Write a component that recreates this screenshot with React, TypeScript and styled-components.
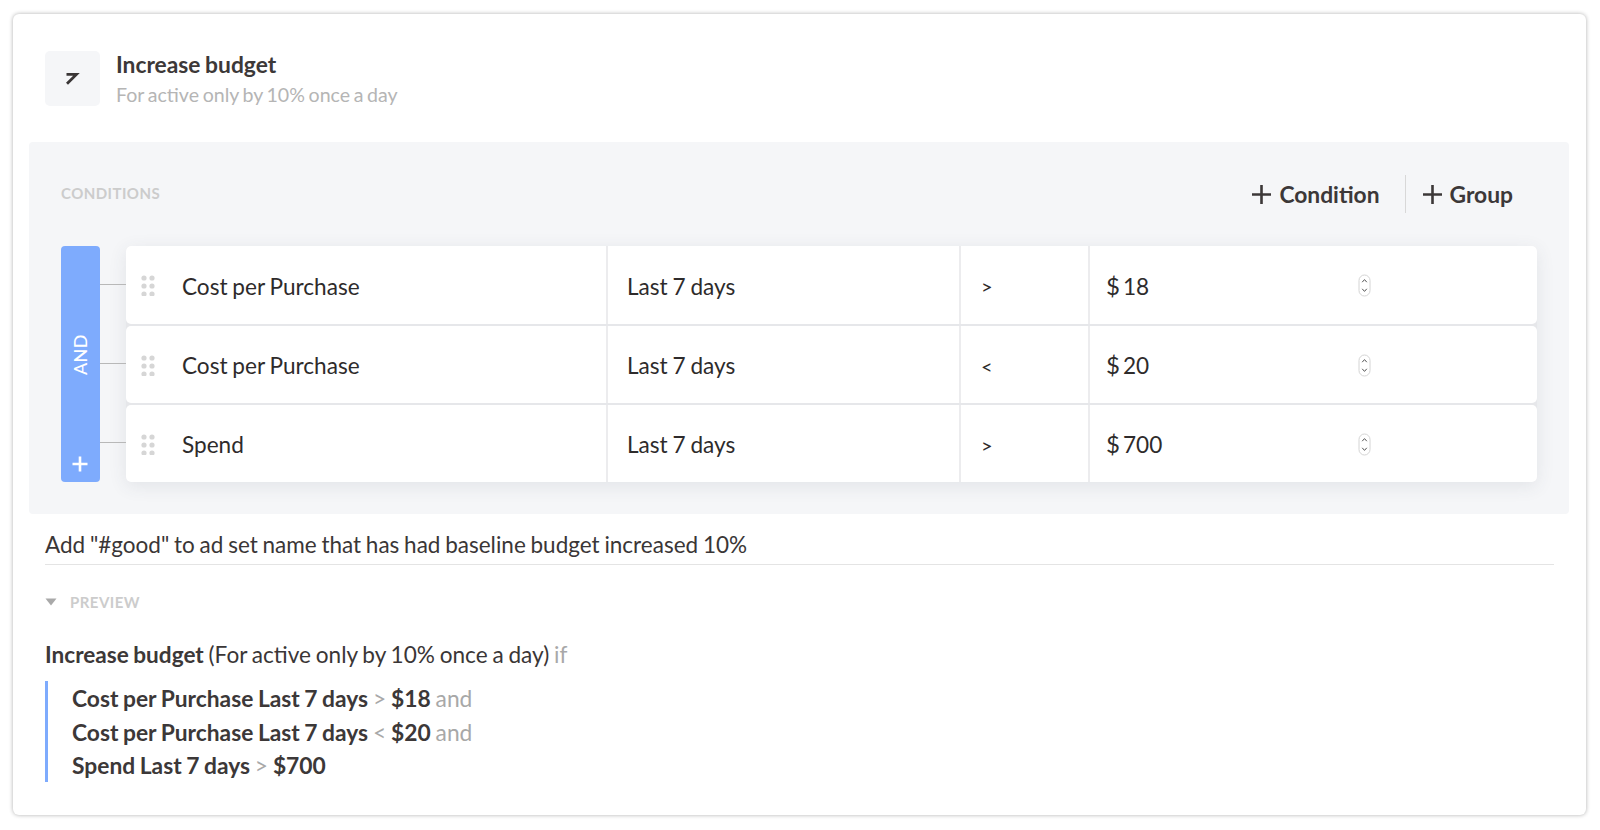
import React from "react";
import styled, { createGlobalStyle } from "styled-components";

const Global = createGlobalStyle`
  html, body { margin: 0; padding: 0; background: #fff; }
  body { font-family: Lato, "Liberation Sans", sans-serif; color: #3a3636; }
`;

const Page = styled.div`
  width: 1600px;
  height: 830px;
  padding: 14px 13px 0 13px;
  box-sizing: border-box;
  overflow: hidden;
`;

const Card = styled.div`
  width: 1573px;
  height: 801px;
  box-sizing: border-box;
  background: #fff;
  border-radius: 6px;
  box-shadow: 0 0 4px rgba(0, 0, 0, 0.32);
  padding: 37px 16px 0 16px;
  word-spacing: -1px;
`;

const Header = styled.div`
  display: flex;
  gap: 16px;
  padding-left: 16px;
  height: 55px;
`;

const IconBox = styled.div`
  width: 55px;
  height: 55px;
  border-radius: 5px;
  background: #f5f6f8;
  display: flex;
  align-items: center;
  justify-content: center;
`;

const Titles = styled.div`
  display: flex;
  flex-direction: column;
`;

const Title = styled.div`
  font-size: 22.8px;
  font-weight: 700;
  line-height: 26px;
  color: #3c3838;
`;

const Subtitle = styled.div`
  font-size: 19.6px;
  line-height: 26px;
  margin-top: 5px;
  color: #b5b5b5;
  word-spacing: -1.4px;
`;

const Panel = styled.div`
  margin-top: 36px;
  height: 372px;
  width: 1540px;
  background: #f5f6f8;
  border-radius: 4px;
  box-sizing: border-box;
  padding: 0 32px;
`;

const PanelHead = styled.div`
  height: 104px;
  display: flex;
  align-items: center;
  justify-content: space-between;
`;

const SectionLabel = styled.div`
  font-size: 15px;
  font-weight: 700;
  letter-spacing: 0.45px;
  line-height: 18px;
  color: #cccccc;
  text-transform: uppercase;
`;

const ConditionsLabel = styled(SectionLabel)`
  margin-top: -2px;
`;

const Actions = styled.div`
  display: flex;
  align-items: center;
  padding-right: 24px;
`;

const ActionButton = styled.div<{ $divided?: boolean }>`
  display: flex;
  align-items: center;
  gap: 7px;
  height: 38px;
  font-size: 22.8px;
  font-weight: 700;
  color: #3c3838;
  ${(p) => p.$divided && "border-left: 1px solid #d8d8d8; margin-left: 25px; padding-left: 16px;"}
`;

const Builder = styled.div`
  display: flex;
`;

const AndBar = styled.div`
  width: 39px;
  height: 236px;
  border-radius: 4px;
  background: #7eabfd;
  color: #fff;
  position: relative;
  flex-shrink: 0;
`;

const AndLabel = styled.div`
  position: absolute;
  left: 0;
  right: 0;
  top: 90px;
  height: 38px;
  display: flex;
  align-items: center;
  justify-content: center;
  writing-mode: vertical-rl;
  transform: rotate(180deg);
  font-size: 18px;
  font-weight: 500;
  letter-spacing: 0.3px;
  margin-left: -1px;
`;

const AndPlus = styled.svg`
  position: absolute;
  left: 11px;
  bottom: 10px;
`;

const Rows = styled.div`
  width: 1411px;
  margin-left: 26px;
  display: flex;
  flex-direction: column;
  gap: 2px;
  border-radius: 5px;
  box-shadow: 0 4px 18px rgba(60, 70, 90, 0.1);
  background: #e6e7ea;
  height: 236px;
`;

const Row = styled.div`
  position: relative;
  flex: 1;
  display: grid;
  grid-template-columns: 480px 353px 129px 1fr;
  background: #fff;
  border-radius: 5px;
  font-size: 22.6px;
  color: #2e2b2b;

  &:first-child {
    flex: 0 0 78px;
  }
`;

const Connector = styled.div`
  position: absolute;
  left: -26px;
  top: 37px;
  width: 26px;
  height: 1px;
  background: #b8b8b8;

  ${Row}:first-child > & {
    top: 38px;
  }
`;

const Cell = styled.div<{ $divided?: boolean; $pad: number }>`
  display: flex;
  align-items: center;
  padding-top: 2px;
  padding-left: ${(p) => p.$pad}px;
  ${(p) => p.$divided && "border-left: 2px solid #ececee;"}
`;

const Grip = styled.svg`
  position: absolute;
  left: 15px;
  top: 29px;
`;

const Op = styled.span`
  font-size: 20px;
  margin-left: -1px;
`;

const Money = styled.span`
  display: flex;
  align-items: center;
  gap: 3px;
`;

const Dollar = styled.span`
  font-size: 24px;
  margin-top: -2px;
`;

const Spinner = styled.svg`
  position: absolute;
  left: 1232px;
  top: 28px;
`;

const Instruction = styled.div`
  padding-left: 16px;
  margin-top: 17px;
  font-size: 22.5px;
  line-height: 28px;
  color: #3a3636;
`;

const Rule = styled.div`
  margin: 5px 16px 0;
  height: 1px;
  background: #e4e4e4;
`;

const PreviewHead = styled.div`
  display: flex;
  align-items: center;
  gap: 13px;
  padding-left: 16px;
  margin-top: 28px;
  height: 18px;
`;

const PreviewTitle = styled.div`
  padding-left: 16px;
  margin-top: 30px;
  font-size: 22.6px;
  line-height: 28px;
  color: #3a3636;
`;

const Quote = styled.div`
  margin: 12px 0 0 16px;
  padding: 1px 0 0 24px;
  border-left: 3px solid #7eabfd;
  font-size: 22.8px;
  line-height: 33.7px;
  height: 101px;
  box-sizing: border-box;
`;

const B = styled.b`
  font-weight: 700;
  color: #3c3838;
`;

const Muted = styled.span`
  color: #a8a8a8;
`;

const PlusIcon = () => (
  <svg width="21" height="21" viewBox="0 0 21 21">
    <path d="M10.5 1v19M1 10.5h19" stroke="#3c3838" strokeWidth="2.6" fill="none" />
  </svg>
);

const rows = [
  { metric: "Cost per Purchase", op: ">", value: "18" },
  { metric: "Cost per Purchase", op: "<", value: "20" },
  { metric: "Spend", op: ">", value: "700" },
];

export default function App() {
  return (
    <Page>
      <Global />
      <Card>
        <Header>
          <IconBox>
            <svg width="16" height="16" viewBox="0 0 16 16">
              <path d="M1.5 3.4H11.4L2 12.8" stroke="#3a3636" strokeWidth="2.8" fill="none" />
            </svg>
          </IconBox>
          <Titles>
            <Title>Increase budget</Title>
            <Subtitle>For active only by 10% once a day</Subtitle>
          </Titles>
        </Header>
        <Panel>
          <PanelHead>
            <ConditionsLabel>Conditions</ConditionsLabel>
            <Actions>
              <ActionButton><PlusIcon />Condition</ActionButton>
              <ActionButton $divided><PlusIcon />Group</ActionButton>
            </Actions>
          </PanelHead>
          <Builder>
            <AndBar>
              <AndLabel>AND</AndLabel>
              <AndPlus width="16" height="16" viewBox="0 0 16 16">
                <path d="M8 0.5v15M0.5 8h15" stroke="#fff" strokeWidth="2.6" fill="none" />
              </AndPlus>
            </AndBar>
            <Rows>
              {rows.map((r, i) => (
                <Row key={i}>
                  <Connector />
                  <Grip width="14" height="21" viewBox="0 0 14 21">
                    {[0, 1, 2].flatMap((y) =>
                      [0, 1].map((x) => (
                        <circle key={`${x}${y}`} cx={3 + x * 8} cy={3 + y * 8} r="2.6" fill="#d6d6d6" />
                      ))
                    )}
                  </Grip>
                  <Cell $pad={56}>{r.metric}</Cell>
                  <Cell $divided $pad={19}>Last 7 days</Cell>
                  <Cell $divided $pad={21}><Op>{r.op}</Op></Cell>
                  <Cell $divided $pad={16}>
                    <Money><Dollar>$</Dollar><span>{r.value}</span></Money>
                  </Cell>
                  <Spinner width="14" height="24" viewBox="0 0 14 24">
                    <rect x="1" y="1" width="11" height="21" rx="5.5" fill="#fff" stroke="#d4d4d4" />
                    <path d="M4.2 8.2L6.5 5.6L8.8 8.2M4.2 14.8L6.5 17.4L8.8 14.8" stroke="#555" strokeWidth="1" fill="none" />
                  </Spinner>
                </Row>
              ))}
            </Rows>
          </Builder>
        </Panel>
        <Instruction>Add "#good" to ad set name that has had baseline budget increased 10%</Instruction>
        <Rule />
        <PreviewHead>
          <svg width="12" height="8" viewBox="0 0 12 8">
            <path d="M0.5 0.5h11L6 7.5z" fill="#a9a9a9" />
          </svg>
          <SectionLabel>Preview</SectionLabel>
        </PreviewHead>
        <PreviewTitle>
          <B>Increase budget</B> (For active only by 10% once a day) <Muted>if</Muted>
        </PreviewTitle>
        <Quote>
          <div><B>Cost per Purchase Last 7 days</B> <Muted>&gt;</Muted> <B>$18</B> <Muted>and</Muted></div>
          <div><B>Cost per Purchase Last 7 days</B> <Muted>&lt;</Muted> <B>$20</B> <Muted>and</Muted></div>
          <div><B>Spend Last 7 days</B> <Muted>&gt;</Muted> <B>$700</B></div>
        </Quote>
      </Card>
    </Page>
  );
}
